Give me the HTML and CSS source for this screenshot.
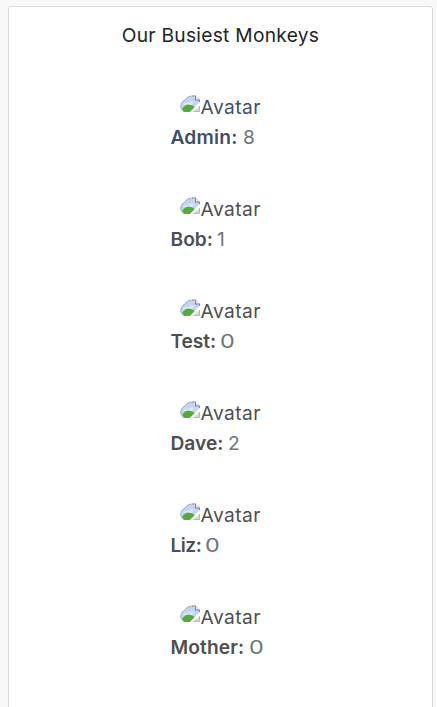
FILE: index.html
```
<!DOCTYPE html>
<html lang="en">
<head>
<meta charset="utf-8">
<title>Our Busiest Monkeys</title>
<link rel="stylesheet" href="styles.css">
</head>
<body>
<svg width="0" height="0" class="defs" aria-hidden="true">
  <symbol id="avatar" viewBox="0 0 20 17">
    <path d="M0.500 12C0.500 8 2 6 5 4.500C6 2 9 0.500 13 0.500L15 3L19.500 5.500V7.500L9 16.800H4Q0.500 15 0.500 12Z" fill="#c3d5f5"/>
    <path d="M3 10Q5 7 9 8Q11 5 14 7L11 11Z" fill="#dce8fb"/>
    <path d="M2 14.500Q4 10 8 9.500Q12 9.500 15 12L10 17H4.500Q2.500 16 2 14.500Z" fill="#55aa3b"/>
    <path d="M4 16.300Q0.500 14 0.700 11Q1 7 5 5Q7 1.500 11.500 1" fill="none" stroke="#a3a8b0" stroke-width="0.900"/>
    <path d="M12 1H15.500V5H19.500V7" fill="none" stroke="#858585" stroke-width="1.100"/>
    <path d="M16 1.500L19 4.500" stroke="#b5b5b5" stroke-width="0.800"/>
    <path d="M10 17L20 7.500V10.500L13 17Z" fill="#fff"/>
    <path d="M13.500 16.500L19.500 11V16.500Z" fill="#d0dfcb"/>
    <path d="M13.500 16.500H19.500V11" fill="none" stroke="#aaa" stroke-width="0.800"/>
  </symbol>
</svg>
<main class="card">
  <h1>Our Busiest Monkeys</h1>
  <ul>
    <li class="active"><div class="avatar"><svg><use href="#avatar"/></svg><span>Avatar</span></div><div><b class="admin">Admin:</b><span class="count">8</span></div></li>
    <li><div class="avatar"><svg><use href="#avatar"/></svg><span>Avatar</span></div><div><b class="bob">Bob:</b><span class="count">1</span></div></li>
    <li><div class="avatar"><svg><use href="#avatar"/></svg><span>Avatar</span></div><div><b class="test">Test:</b><span class="count zero">0</span></div></li>
    <li><div class="avatar"><svg><use href="#avatar"/></svg><span>Avatar</span></div><div><b class="dave">Dave:</b><span class="count">2</span></div></li>
    <li><div class="avatar"><svg><use href="#avatar"/></svg><span>Avatar</span></div><div><b class="liz">Liz:</b><span class="count zero">0</span></div></li>
    <li><div class="avatar"><svg><use href="#avatar"/></svg><span>Avatar</span></div><div><b class="mother">Mother:</b><span class="count zero">0</span></div></li>
  </ul>
</main>
</body>
</html>
```
FILE: styles.css
```
* { box-sizing: border-box; }
body {
  margin: 0;
  padding: 6px 4px 0 8px;
  height: 707px;
  overflow: hidden;
  background: #f8f8f8;
  font: 19.2px/30px Inter, "Liberation Sans", sans-serif;
  color: #4f4f4f;
}
.defs { position: absolute; }
.card {
  height: 720px;
  padding-top: 13px;
  background: #fff;
  border: 1px solid #d9d9d9;
  border-radius: 3px;
}
h1 {
  margin: 0 0 42px;
  font-size: 19.2px;
  font-weight: 400;
  text-align: center;
  letter-spacing: 0.27px;
  color: #212529;
}
ul { margin: 0; padding: 0 0 0 161.5px; list-style: none; }
li { height: 60px; margin-bottom: 42px; white-space: nowrap; }
.active { color: #3d4f6b; }
.avatar { display: flex; padding-left: 9.5px; letter-spacing: 0.45px; }
.avatar svg { width: 20px; height: 17px; margin: 3px 0.5px 0 0; flex: none; }
b { display: inline-block; font-weight: 600; }
.admin { width: 72.5px; letter-spacing: 0.2px; }
.bob { width: 46.5px; letter-spacing: 0; }
.test { width: 49.5px; letter-spacing: -0.1px; }
.dave { width: 57.5px; letter-spacing: 0; }
.liz { width: 34.5px; letter-spacing: -0.5px; }
.mother { width: 78.5px; letter-spacing: 0.1px; }
.count { display: inline-block; color: #6c757d; }
.zero { transform: scaleX(1.22); transform-origin: left; }
```
